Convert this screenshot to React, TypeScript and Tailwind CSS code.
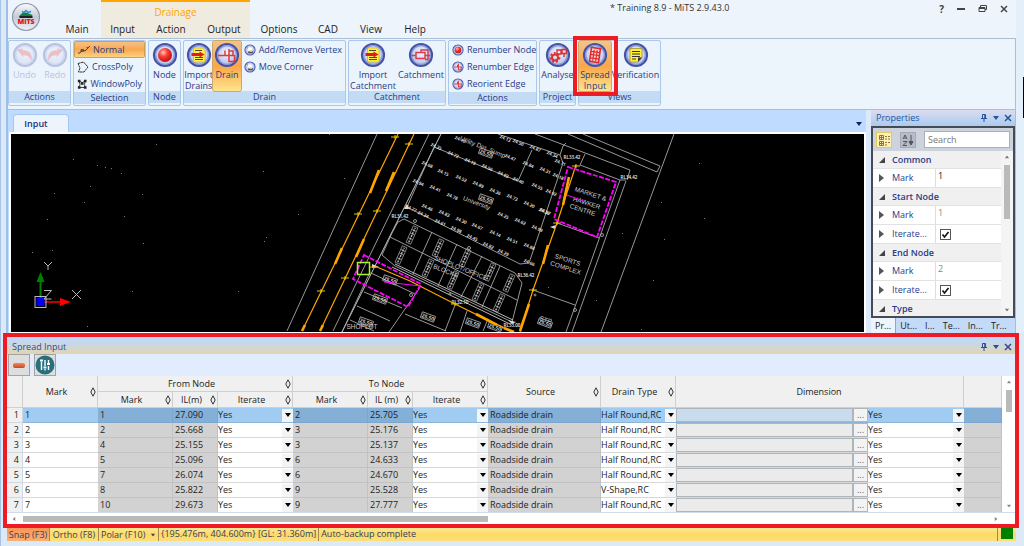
import React from "react";

type Kids = { children?: React.ReactNode };

/* ---------- icons ---------- */

function Orb({ children, small, faded }: Kids & { small?: boolean; faded?: boolean }) {
  return (
    <svg
      viewBox="0 0 26 26"
      aria-hidden="true"
      className={`${small ? "size-3" : "size-[26px]"} shrink-0 ${faded ? "opacity-30" : ""}`}
    >
      <defs>
        <radialGradient id="orbFill" cx="50%" cy="40%" r="60%">
          <stop offset="0" stopColor="#f4f7ff" />
          <stop offset="1" stopColor="#aebbe6" />
        </radialGradient>
        <radialGradient id="ball" cx="38%" cy="32%" r="70%">
          <stop offset="0" stopColor="#ffc4bc" />
          <stop offset="0.45" stopColor="#fb3a30" />
          <stop offset="1" stopColor="#c00f10" />
        </radialGradient>
      </defs>
      <circle cx="13" cy="13" r="11" fill="url(#orbFill)" stroke="#4353a6" strokeWidth="2.2" />
      <circle cx="13" cy="13" r="9.3" fill="none" stroke="#8896d6" strokeWidth="1.2" />
      {children}
    </svg>
  );
}

const Ball = () => <circle cx="13" cy="13" r="7" fill="url(#ball)" />;
const Sheet = () => (
  <g>
    <path d="M7.5 6h9l2.500 2.500v11.500h-11.500z" fill="#fff04a" stroke="#c9a800" strokeWidth="0.6" />
    <path d="M9 8.500h7M9 17.500h8M9 15.500h8" stroke="#333" strokeWidth="0.9" />
    <path d="M5.500 11h8V9.500l5 3-5 3V14h-8z" fill="#e01b1b" />
  </g>
);
const DrainGlyph = () => (
  <path d="M4 13.500h7V8.500M11 13.500h4M15 7v6.500h5.500v6H15v-6M15 9h4v4.500" fill="none" stroke="#e23a3a" strokeWidth="1.500" />
);
const CatchGlyph = () => (
  <path d="M3.500 13.500H8M8 10.500h9v6H8zM17 13.500h5M13 10.500V8h7v5.500M20 13.500v4h-3" fill="none" stroke="#d83c48" strokeWidth="1.400" />
);
const GearGlyph = () => (
  <g fill="none" stroke="#dd2f2f">
    <circle cx="10" cy="15.500" r="3" strokeWidth="2" />
    <circle cx="10" cy="15.500" r="4.600" strokeWidth="1.600" strokeDasharray="2 2" />
    <path d="M12 8h4v4h-4zM17 7.500h4.500v4H17zM16 10h1M19 12v3" strokeWidth="1.400" />
  </g>
);
const SpreadGlyph = () => (
  <g transform="rotate(8 13 13)">
    <path d="M8.500 6h9v14h-9z" fill="#f6d6d6" stroke="#e22b2b" strokeWidth="1.600" />
    <path d="M8.500 10h9M8.500 13h9M8.500 16.500h9M11.500 8v11M14.500 8v11" stroke="#e22b2b" strokeWidth="1.200" />
  </g>
);
const VerifyGlyph = () => (
  <g>
    <path d="M7 6.500h12v9L15 20H7z" fill="#ffee3c" stroke="#8a7a00" strokeWidth="0.600" />
    <path d="M9 9.500h8M9 12h8M9 14.500h8M9 17h4" stroke="#333" strokeWidth="1" />
    <path d="M15 20v-4.500h4z" fill="#333" />
  </g>
);
const EdgeGlyph = () => (
  <path d="M5 13h7V8M12 13h2V6M14 13h6v6h-6z" fill="none" stroke="#e04040" strokeWidth="2.400" />
);
const MoveGlyph = () => (
  <g>
    <path d="M7 7l5 9 8 1" fill="none" stroke="#68c" strokeWidth="2" />
    <rect x="8" y="8" width="9" height="7" rx="3" fill="#fff" />
    <path d="M9 16h10v4H9z" fill="#45516b" />
    <path d="M12 13h5v4h-5z" fill="#ffe45c" />
  </g>
);
const UndoGlyph = () => (
  <path d="M5 7.500l6-1-1 2c7-1 11 4 9.500 10.500-1.500-4-4.500-6.500-8.500-5.500l1 2.500z" fill="#ef4b4b" />
);
const RedoGlyph = () => (
  <path d="M21 7.500l-6-1 1 2c-7-1-11 4-9.500 10.500 1.500-4 4.500-6.500 8.500-5.500l-1 2.500z" fill="#ef4b4b" />
);

function Pin() {
  return (
    <svg viewBox="0 0 8 8" className="size-2" fill="none" stroke="currentColor" aria-hidden="true">
      <path d="M2.500 0.500h3v4M2.500 0.500v4M1 4.500h6M4 5v3" />
      <path d="M5 1v3.500" strokeWidth="1.500" />
    </svg>
  );
}
function Caret({ className = "" }: { className?: string }) {
  return (
    <svg viewBox="0 0 6 4" className={`h-1 w-1.5 ${className}`} fill="currentColor" aria-hidden="true">
      <path d="M0 0h6L3 4z" />
    </svg>
  );
}
function Cross() {
  return (
    <svg viewBox="0 0 8 8" className="size-2" stroke="currentColor" strokeWidth="1.500" aria-hidden="true">
      <path d="M1 1l6 6M7 1L1 7" />
    </svg>
  );
}
function PaneButtons() {
  return (
    <div className="flex items-center gap-1">
      <button aria-label="Pin"><Pin /></button>
      <button aria-label="Menu" className="px-px"><Caret /></button>
      <button aria-label="Close"><Cross /></button>
    </div>
  );
}
function Diamond() {
  return (
    <svg viewBox="0 0 6 10" className="h-2.5 w-1.5 shrink-0" fill="none" stroke="#333" aria-hidden="true">
      <path d="M3 0.800L5.200 5 3 9.200 0.800 5z" />
    </svg>
  );
}

/* ---------- ribbon ---------- */

function Group({ label, width, children }: Kids & { label: string; width: string }) {
  return (
    <section className={`flex flex-col rounded-xs border border-[#a9c8ec] bg-[#ebf3fc] ${width}`}>
      <div className="flex flex-1 items-start">{children}</div>
      <h2 className="mb-0.5 h-[13px] bg-[#c3dbf4] text-center leading-3">{label}</h2>
    </section>
  );
}

function BigButton({
  icon, lines, width, on, off, marked,
}: { icon: React.ReactNode; lines: string[]; width: string; on?: boolean; off?: boolean; marked?: boolean }) {
  return (
    <button
      disabled={off}
      className={`relative flex h-[50px] flex-col items-center pt-px whitespace-nowrap ${width} ${
        on ? "rounded-xs bg-linear-to-b from-[#f3c38b] via-[#f9a648] to-[#fde58c] outline outline-[#cba768]" : ""
      } ${off ? "text-[#b9c3e2]" : ""}`}
    >
      {icon}
      <span className="flex flex-col pt-px leading-[11px]">
        {lines.map((l) => <span key={l}>{l}</span>)}
      </span>
      {marked && <span className="absolute -top-[5px] -right-[7px] -bottom-[5px] -left-[6px] z-10 border-4 border-[#ed1c24]" />}
    </button>
  );
}

function SmallButton({ icon, label, on }: { icon: React.ReactNode; label: string; on?: boolean }) {
  return (
    <button
      className={`flex h-[17px] items-center gap-[3px] px-[3px] whitespace-nowrap ${
        on ? "rounded-xs border border-[#cf9f57] bg-linear-to-b from-[#f6c083] via-[#f9a850] to-[#fdd27e]" : ""
      }`}
    >
      {icon}
      {label}
    </button>
  );
}

const NormalIcon = () => (
  <svg viewBox="0 0 12 10" className="h-2.5 w-3" fill="none" stroke="#444" aria-hidden="true">
    <path d="M0 8h2l2-3 3 1 3-3 2-2" />
    <path d="M3 4.500h2.500v2H3zM8.500 2.500h2" strokeWidth="0.800" />
  </svg>
);
const PolyIcon = () => (
  <svg viewBox="0 0 12 12" className="size-3" fill="none" stroke="#333" aria-hidden="true">
    <path d="M1 2.500l5.500-1.500 4.500 5-4 5H1.500l1.500-4z" strokeDasharray="2.500 0.400" />
  </svg>
);
const WindowPolyIcon = () => (
  <svg viewBox="0 0 12 12" className="size-3" fill="none" stroke="#222" aria-hidden="true">
    <path d="M2.500 2.500l3.500 2 3.500-2-1 4 1 3.500h-7l1-3.500z" />
    <path d="M1 1h3v3H1zM8 1h3v3H8zM1 8.500h3v3H1zM8 8.500h3v3H8zM4.500 4h3v3h-3z" fill="#222" stroke="none" />
  </svg>
);

function Ribbon() {
  return (
    <div className="flex h-[72px] gap-0.5 border-y border-r border-y-[#aebdd2] border-r-[#aebdd2] bg-[#ecf4fc] pt-px pb-[3px] text-[#2a3c86]">
      <Group label="Actions" width="w-[63px]">
        <BigButton off width="w-[31px]" icon={<Orb faded><UndoGlyph /></Orb>} lines={["Undo"]} />
        <BigButton off width="w-[30px]" icon={<Orb faded><RedoGlyph /></Orb>} lines={["Redo"]} />
      </Group>
      <Group label="Selection" width="w-[73px]">
        <div className="flex w-full flex-col">
          <SmallButton on icon={<NormalIcon />} label="Normal" />
          <SmallButton icon={<PolyIcon />} label="CrossPoly" />
          <SmallButton icon={<WindowPolyIcon />} label="WindowPoly" />
        </div>
      </Group>
      <Group label="Node" width="w-[33px]">
        <BigButton width="w-full" icon={<Orb><Ball /></Orb>} lines={["Node"]} />
      </Group>
      <Group label="Drain" width="w-[163px]">
        <BigButton width="w-[31px]" icon={<Orb><Sheet /></Orb>} lines={["Import", "Drains"]} />
        <BigButton on width="w-[29px]" icon={<Orb><DrainGlyph /></Orb>} lines={["Drain"]} />
        <div className="flex flex-col">
          <SmallButton icon={<Orb small><MoveGlyph /></Orb>} label="Add/Remove Vertex" />
          <SmallButton icon={<Orb small><MoveGlyph /></Orb>} label="Move Corner" />
        </div>
      </Group>
      <Group label="Catchment" width="w-[98px]">
        <BigButton width="w-[48px]" icon={<Orb><Sheet /></Orb>} lines={["Import", "Catchment"]} />
        <BigButton width="w-[48px]" icon={<Orb><CatchGlyph /></Orb>} lines={["Catchment"]} />
      </Group>
      <Group label="Actions" width="w-[89px]">
        <div className="flex flex-col">
          <SmallButton icon={<Orb small><Ball /></Orb>} label="Renumber Node" />
          <SmallButton icon={<Orb small><EdgeGlyph /></Orb>} label="Renumber Edge" />
          <SmallButton icon={<Orb small><EdgeGlyph /></Orb>} label="Reorient Edge" />
        </div>
      </Group>
      <Group label="Project" width="w-[37px]">
        <BigButton width="w-full" icon={<Orb><GearGlyph /></Orb>} lines={["Analyse"]} />
      </Group>
      <Group label="Views" width="w-[83px]">
        <BigButton on marked width="w-[32px]" icon={<Orb><SpreadGlyph /></Orb>} lines={["Spread", "Input"]} />
        <BigButton width="w-[49px]" icon={<Orb><VerifyGlyph /></Orb>} lines={["Verification"]} />
      </Group>
    </div>
  );
}

function Tab({ label, width }: { label: string; width: string }) {
  return <button className={`h-[18px] text-center text-[#222] ${width}`}>{label}</button>;
}

function TitleBar() {
  return (
    <header className="flex h-[38px] bg-[#edf4fc] text-[10px]">
      <div className="flex w-[45px] items-center pb-1 pl-[3px]">
        <svg viewBox="0 0 30 30" className="size-[30px]" role="img" aria-label="MiTS">
          <defs>
            <linearGradient id="appBtn" x1="0" y1="0" x2="0" y2="1">
              <stop offset="0" stopColor="#fafbfd" />
              <stop offset="0.5" stopColor="#c5cbd6" />
              <stop offset="1" stopColor="#eef1f6" />
            </linearGradient>
          </defs>
          <circle cx="15" cy="15" r="13.500" fill="url(#appBtn)" stroke="#8d97a8" strokeWidth="1.200" />
          <path d="M8.500 13.500l4-3.500 4 1 5 2-1 2.500h-12z" fill="#17803d" />
          <path d="M11 9.500l2 1 2-2 2 2 3-1" fill="none" stroke="#2d8fd0" strokeWidth="1.500" />
          <path d="M8.500 14h13v2h-13z" fill="#222" />
          <text x="15" y="21.500" textAnchor="middle" fontSize="7" fontWeight="800" fill="#e3141b">MiTS</text>
        </svg>
      </div>
      <nav className="flex items-end">
        <Tab label="Main" width="w-[48px]" />
        <div className="flex h-full flex-col justify-between border-t-2 border-[#ffa500] bg-[#f0ebdf]">
          <span className="pt-1 text-center text-[#ffa500]">Drainage</span>
          <div className="flex">
            <Tab label="Input" width="w-[43px]" />
            <Tab label="Action" width="w-[54px]" />
            <Tab label="Output" width="w-[52px]" />
          </div>
        </div>
        <Tab label="Options" width="w-[58px]" />
        <Tab label="CAD" width="w-[40px]" />
        <Tab label="View" width="w-[46px]" />
        <Tab label="Help" width="w-[42px]" />
      </nav>
      <h1 className="flex-1 pt-0.5 pl-[174px] text-[9px] text-[#333]">* Training 8.9 - MiTS 2.9.43.0</h1>
      <div className="flex h-[17px] items-center gap-[13px] pr-2 text-[#444]">
        <button aria-label="Help" className="text-[10px] font-bold">?</button>
        <button aria-label="Minimize"><span className="block h-0.5 w-2 bg-[#444]" /></button>
        <button aria-label="Restore">
          <svg viewBox="0 0 9 9" className="size-[9px]" fill="none" stroke="currentColor" aria-hidden="true">
            <path d="M2.500 3V1.500h6v4H7M1 3.500h6v4H1zM1 4.500h6" />
          </svg>
        </button>
        <button aria-label="Close"><Cross /></button>
      </div>
    </header>
  );
}

/* ---------- drawing ---------- */

const dots = [
  [156, 144], [73, 159], [97, 165], [105, 167], [111, 168], [121, 173], [90, 186], [54, 193], [142, 194], [84, 202],
  [124, 216], [47, 219], [143, 243], [32, 252], [52, 250], [42, 277], [132, 291], [238, 291], [263, 171], [298, 214],
  [266, 237], [264, 241], [87, 326], [329, 134], [344, 178], [699, 163], [661, 202], [704, 218], [622, 233], [664, 239],
  [653, 280], [596, 300], [641, 329], [548, 287],
];

const spots = [
  [460, 140], [510, 158], [528, 165], [545, 171], [427, 165], [443, 173], [461, 179], [478, 185], [495, 192], [512, 198],
  [529, 205], [545, 212], [418, 183], [435, 189], [452, 197], [503, 216], [520, 222], [537, 229], [427, 208], [444, 214],
  [461, 221], [477, 227], [495, 234], [512, 241], [529, 247], [436, 147], [453, 155], [470, 162], [487, 168], [503, 175],
  [518, 181], [411, 209], [423, 215], [440, 223], [456, 230], [472, 238], [488, 246], [503, 253], [529, 263], [505, 139],
  [518, 143], [535, 149], [552, 155], [560, 163], [558, 177], [537, 187], [551, 193], [544, 212],
];

const boxed = [
  [486, 153], [486, 199], [390, 280], [380, 299], [428, 317], [366, 322], [473, 323], [545, 323], [495, 327],
];

const stacks = [
  [412, 235], [401, 255], [438, 248], [428, 268], [465, 258], [453, 280], [490, 272], [478, 292], [509, 283], [499, 303],
];

const crosses = [
  [395, 137], [409, 144], [358, 214], [377, 211], [345, 278], [321, 291], [576, 166], [557, 223], [533, 290], [455, 304],
];

const words: [number, number, number, string][] = [
  [590, 196, 18, "MARKET &"], [586, 205, 18, "HAWKER"], [582, 212, 18, "CENTRE"], [567, 262, 18, "SPORTS"],
  [565, 270, 18, "COMPLEX"], [545, 322, 18, "STP"], [460, 270, 22, "SHOPLOT/OFFICE"], [445, 273, 22, "BLOCKS"],
  [476, 205, 20, "University"], [482, 149, 22, "Utility Det. Sump"], [362, 329, 0, "SHOPLOT"],
];

function Drawing() {
  return (
    <svg
      viewBox="11 134 853 198"
      preserveAspectRatio="xMinYMin slice"
      className="h-full w-full"
      role="img"
      aria-label="Drainage layout plan"
    >
      <g fill="#777">
        {dots.map(([x, y]) => <rect key={`${x}-${y}`} x={x} y={y} width="1" height="1" />)}
      </g>
      <g fill="none" stroke="#a8a8a8" strokeWidth="0.900">
        <path d="M287 331L377 134M333 331L429 134" />
        <path d="M342 332L441 134" stroke="#ddd" />
        <path d="M434 147L407 207L520 264L529 263L563 163L560 155L498 134M434 147L518 181L532 150M563 146L560 155" />
        <path d="M535 134L630 170L627 180M568 134L657 172L660 166L583 134M674 134L601 332M585 154L580 165L620 180H626" />
        <path d="M620 180L566 332M626 181L572 332M557 223L599 238M533 290L575 305M563 146L566 143" />
        <path d="M404 219L515 273L522 283L512 322L395 266L382 255L392 233L398 222z" />
        <path d="M390 237L517 300M432 232L413 274M457 244L438 286M482 256L461 297M500 266L482 307" />
        <path d="M395 264L513 320M392 267L510 324" stroke="#ccc" />
        <path d="M370 272L342 332M364 292L402 308M357 306L390 321M350 320L374 331M421 286L389 332M405 314L446 331" />
        <path d="M455 305L445 331M467 311L460 332M488 319L483 331M371 273L415 294" />
        <circle cx="415" cy="221" r="1.500" />
        <circle cx="469" cy="248" r="1.500" />
        <circle cx="411" cy="295" r="1.500" />
        <circle cx="602" cy="235" r="1.500" />
        <circle cx="575" cy="310" r="1.500" />
        <circle cx="535" cy="295" r="1" />
        <circle cx="450" cy="294" r="1" />
      </g>
      <g fill="#f0f0f0" fontSize="4.500" fontWeight="600" textAnchor="middle">
        {spots.map(([x, y], i) => (
          <text key={i} x={x} y={y + 1} transform={`rotate(24 ${x} ${y})`}>
            {`24.${(i * 37) % 90 + 10}`}
          </text>
        ))}
        {boxed.map(([x, y]) => (
          <g key={`${x}-${y}`} transform={`rotate(20 ${x} ${y})`}>
            <rect x={x - 7} y={y - 3} width="14" height="6" fill="none" stroke="#aaa" strokeWidth="0.800" />
            <text x={x} y={y + 2} fontSize="5">25.50</text>
          </g>
        ))}
        <text x="400" y="218">RL31.42</text>
        <text x="526" y="277">RL36.42</text>
        <text x="460" y="304">RL32.10</text>
        <text x="572" y="159">RL33.42</text>
        <text x="629" y="179">RL34.42</text>
        <text x="512" y="327">RL33.00</text>
      </g>
      <g fill="none" stroke="#bbb" strokeWidth="1">
        {stacks.map(([x, y]) => (
          <g key={`${x}-${y}`} transform={`rotate(-66 ${x} ${y})`}>
            <path d={`M${x - 9} ${y - 2.5}h18v5h-18zM${x - 4} ${y - 2.5}v5M${x + 1} ${y - 2.5}v5M${x + 5} ${y - 2.5}v5`} strokeWidth="0.600" />
            <path d={`M${x - 8} ${y}h16`} strokeDasharray="2 1" strokeWidth="1.500" />
          </g>
        ))}
      </g>
      <g fill="#ccc" fontSize="6.500" textAnchor="middle" fontFamily="Liberation Sans, sans-serif">
        {words.map(([x, y, r, t]) => <text key={t} x={x} y={y} transform={`rotate(${r} ${x} ${y})`}>{t}</text>)}
      </g>
      <path d="M407 204l2 5h-5zM372 264l7 3-7 1zM550 227l6-2-1 4zM508 320l8 2-4 2z" fill="#ddd" />
      <g fill="none" stroke="#ffa500">
        <path d="M302 331L398 134M320 331L414 134M576 165L557 223L533 290L520 332M369 267H377L410 281L455 304L512 332" strokeWidth="1.200" />
        <path
          d="M370 193L379 170M386 191L394 172M335 264L342 248M356 257L364 239M302 331L305 325M320 331L323 325M569 177L563 205M548 245L543 264M529 304L520 331M476 314L497 325M504 328L514 332"
          strokeWidth="2.600"
        />
      </g>
      <g stroke="#e8c800" strokeWidth="1">
        {crosses.map(([x, y]) => <path key={`${x}-${y}`} d={`M${x - 4} ${y}h8M${x} ${y - 2}v4`} />)}
      </g>
      <path d="M568 167L616 182L597 237L554 219zM364 255L421 284L408 307L353 279z" fill="none" stroke="#ff00ff" strokeWidth="1.800" strokeDasharray="5 1.500" />
      <path d="M384 282L421 286M567 195L586 202" stroke="#ff00ff" strokeWidth="1" fill="none" />
      <rect x="357.500" y="262.500" width="12" height="12" fill="none" stroke="#a6f52c" strokeWidth="1.500" />
      <g>
        <path d="M40.500 298V280" stroke="#008000" strokeWidth="2" />
        <path d="M36.500 282L40.500 272L44.500 282z" fill="#008000" />
        <path d="M44 302H60" stroke="#f00" strokeWidth="1.500" />
        <path d="M60 298L71 302L60 306z" fill="#f00" />
        <rect x="35" y="296.500" width="11" height="11" fill="none" stroke="#bbb" />
        <rect x="36.500" y="298" width="8" height="8" fill="#0000ff" />
        <path d="M44 262l4 4 4-4M48 266v4M72 290l9 9M81 290l-9 9M44 290.500h7.500L44 299h7.500" fill="none" stroke="#bbb" />
      </g>
    </svg>
  );
}

/* ---------- properties ---------- */

function Category({ label }: { label: string }) {
  return (
    <div className="flex h-[18px] items-center gap-[7px] border-b border-[#e2e2e2] bg-[#f0f0f0] pl-[6px] font-semibold">
      <svg viewBox="0 0 6 6" className="size-1.5" aria-hidden="true"><path d="M6 0v6H0z" fill="#444" /></svg>
      {label}
    </div>
  );
}

function Item({ label, id, value, muted }: { label: string; id: string; value?: string; muted?: boolean }) {
  return (
    <div className="flex h-[19px] border-b border-[#e2e2e2] bg-white">
      <label htmlFor={id} className="flex w-[63px] items-center gap-2 border-r border-[#ddd] pl-[6px]">
        <svg viewBox="0 0 5 8" className="h-2 w-[5px]" aria-hidden="true"><path d="M0 0l5 4-5 4z" fill="#555" /></svg>
        {label}
      </label>
      {value ? (
        <input id={id} defaultValue={value} className={`min-w-0 flex-1 pb-1 pl-0.5 outline-none ${muted ? "text-[#888]" : "text-[#222]"}`} />
      ) : (
        <span className="grid items-center pl-1">
          <input
            id={id}
            type="checkbox"
            defaultChecked
            className="peer col-start-1 row-start-1 size-[11px] appearance-none border border-[#555] bg-white"
          />
          <svg viewBox="0 0 11 11" className="pointer-events-none invisible col-start-1 row-start-1 size-[11px] peer-checked:visible" fill="none" stroke="#111" strokeWidth="1.600" aria-hidden="true">
            <path d="M2.500 5.500l2 2.500L8.500 3" />
          </svg>
        </span>
      )}
    </div>
  );
}

function Properties() {
  return (
    <aside className="flex w-[145px] flex-col border-r border-[#9bbfe8] bg-[#c3daf8] text-[#2a3c86]">
      <div className="flex h-[16px] items-center justify-between bg-linear-to-b from-[#dcdcf0] to-[#a9cbf0] pr-[3px] pl-[5px] text-[#22559c]">
        <h2>Properties</h2>
        <PaneButtons />
      </div>
      <div className="flex min-h-0 flex-1 flex-col border-2 border-[#444b55] bg-[#cdd3dc]">
        <div className="flex h-[23px] items-center gap-2 px-[3px]">
          <button aria-label="Categorized" className="border border-[#e6c860] bg-[#fdf0b4] p-px">
            <svg viewBox="0 0 12 12" className="size-3" fill="none" stroke="#8a7440" aria-hidden="true">
              <path d="M1.500 1.500h4v4h-4zM1.500 7.500h4v4h-4zM2 3.500h3M3.500 2v3M2 9.500h3M3.500 8v3M7 2.500h2M10 2.500h2M7 5h2M10 5h2M7 8.500h2M10 8.500h2M7 11h2" />
            </svg>
          </button>
          <button aria-label="Sort alphabetically" className="border border-[#a4abb6] bg-[#b5bcc8] p-px">
            <svg viewBox="0 0 12 12" className="size-3" fill="none" stroke="#50555e" aria-hidden="true">
              <path d="M1 5l2-4 2 4M2 4h2M1 7.500h4l-4 4h4M9 1v9" />
              <path d="M7 7.500h4L9 11z" fill="#50555e" />
            </svg>
          </button>
          <input aria-label="Search" placeholder="Search" className="h-[17px] min-w-0 flex-1 border border-[#a8b0bc] bg-white px-[3px] placeholder:text-[#777]" />
        </div>
        <div className="flex min-h-0 flex-1">
          <div className="min-w-0 flex-1 overflow-hidden">
            <Category label="Common" />
            <Item id="c-mark" label="Mark" value="1" />
            <Category label="Start Node" />
            <Item id="s-mark" label="Mark" value="1" muted />
            <Item id="s-iter" label="Iterate..." />
            <Category label="End Node" />
            <Item id="e-mark" label="Mark" value="2" muted />
            <Item id="e-iter" label="Iterate..." />
            <Category label="Type" />
          </div>
          <div className="flex w-3 flex-col items-center justify-between bg-[#f4f4f4] py-1 text-[#777]">
            <Caret className="rotate-180 scale-75" />
            <div className="mt-1.5 mb-auto h-[54px] w-1.5 bg-[#bababa]" />
            <Caret className="scale-75" />
          </div>
        </div>
      </div>
      <div className="flex h-[15px] items-center text-[#222]">
        {["Pr...", "Ut...", "I...", "Te...", "In...", "Tr..."].map((t, i) => (
          <button key={t} className={`h-full px-1 ${i === 0 ? "border-r border-[#8aa8cc] bg-[#edf4fc]" : ""}`}>{t}</button>
        ))}
      </div>
    </aside>
  );
}

/* ---------- spread input ---------- */

type Row = [string, string, string, string, string, string];
const rows: Row[] = [
  ["1", "1", "27.090", "2", "25.705", "Half Round,RC"],
  ["2", "2", "25.668", "3", "25.176", "Half Round,RC"],
  ["3", "4", "25.155", "3", "25.137", "Half Round,RC"],
  ["4", "5", "25.096", "6", "24.633", "Half Round,RC"],
  ["5", "7", "26.074", "6", "24.670", "Half Round,RC"],
  ["6", "8", "25.822", "9", "25.528", "V-Shape,RC"],
  ["7", "10", "29.673", "9", "27.777", "Half Round,RC"],
];

function Head({ children, sort = true, ...span }: Kids & { sort?: boolean; rowSpan?: number; colSpan?: number }) {
  return (
    <th {...span} className="border-r border-b border-[#cfcfcf] p-0 font-normal">
      <div className="flex items-center pr-px">
        <span className="flex-1">{children}</span>
        {sort && <Diamond />}
      </div>
    </th>
  );
}

function Pick({ value, label }: { value: string; label: string }) {
  const options = value === "Yes" ? ["Yes", "No"] : ["Half Round,RC", "V-Shape,RC"];
  return (
    <div className="grid h-[14px] items-center">
      <select aria-label={label} defaultValue={value} className="col-start-1 row-start-1 h-[14px] w-full appearance-none leading-[14px] outline-none">
        {options.map((o) => <option key={o}>{o}</option>)}
      </select>
      <span className="pointer-events-none col-start-1 row-start-1 flex h-[13px] w-[11px] items-center justify-center justify-self-end bg-[#f3f4f5] text-black">
        <Caret />
      </span>
    </div>
  );
}

function SpreadTable() {
  const widths = ["w-[16px]", "w-[75px]", "w-[75px]", "w-[45px]", "w-[75px]", "w-[75px]", "w-[45px]", "w-[75px]", "w-[113px]", "w-[75px]", "w-[177px]", "w-[15px]", "w-[96px]", ""];
  return (
    <table className="w-full table-fixed border-separate border-spacing-0">
      <colgroup>{widths.map((w, i) => <col key={i} className={w} />)}</colgroup>
      <thead className="bg-[#f0f0f0]">
        <tr className="h-4">
          <Head rowSpan={2} sort={false} />
          <Head rowSpan={2}>Mark</Head>
          <Head colSpan={3}>From Node</Head>
          <Head colSpan={3}>To Node</Head>
          <Head rowSpan={2}>Source</Head>
          <Head rowSpan={2}>Drain Type</Head>
          <Head rowSpan={2} colSpan={3} sort={false}>Dimension</Head>
          <Head rowSpan={2} sort={false} />
        </tr>
        <tr className="h-4">
          <Head>Mark</Head><Head>IL(m)</Head><Head>Iterate</Head>
          <Head>Mark</Head><Head>IL (m)</Head><Head>Iterate</Head>
        </tr>
      </thead>
      <tbody>
        {rows.map(([mark, from, fromIl, to, toIl, type], i) => {
          const open = i === 0 ? "border-b border-[#8fb4d6] bg-[#a0ccf1] p-0" : "border-b border-[#d8d8d8] bg-white p-0";
          const lock = i === 0
            ? "border-b border-r border-[#7ba6cd] bg-[#84afd6] p-0 pl-0.5"
            : "border-b border-r border-[#c2c2c2] bg-[#d2d2d2] p-0 pl-0.5";
          return (
            <tr key={mark} className="h-[15px]">
              <th scope="row" className="border-r border-b border-[#d0d8e2] bg-[#f0f0f0] p-0 pr-[3px] text-right font-normal">{mark}</th>
              <td className={`${open} pl-0.5`}>{mark}</td>
              <td className={lock}>{from}</td>
              <td className={lock}>{fromIl}</td>
              <td className={open}><Pick value="Yes" label={`From node iterate, row ${mark}`} /></td>
              <td className={lock}>{to}</td>
              <td className={lock}>{toIl}</td>
              <td className={open}><Pick value="Yes" label={`To node iterate, row ${mark}`} /></td>
              <td className={lock}>Roadside drain</td>
              <td className={open}><Pick value={type} label={`Drain type, row ${mark}`} /></td>
              <td className={open}>
                <input aria-label={`Dimension, row ${mark}`} className={`block h-[14px] w-full border border-[#b0b5ba] ${i === 0 ? "bg-[#c9dcee]" : "bg-[#ebebeb]"}`} />
              </td>
              <td className={open}>
                <button aria-label="Edit dimension" className="block h-[14px] w-full border border-[#b0b5ba] bg-[#f3f3f3] leading-3 text-[#666]">...</button>
              </td>
              <td className={open}><Pick value="Yes" label={`Dimension iterate, row ${mark}`} /></td>
              <td className={lock} />
            </tr>
          );
        })}
      </tbody>
    </table>
  );
}

function SpreadInput() {
  return (
    <section className="mr-[5px] ml-0.5 border-4 border-[#ed1c24] bg-[#e1edfe] text-[#222]">
      <div className="flex h-[17px] items-center justify-between border-t-2 border-[#bcd7fb] bg-linear-to-b from-[#bfd8fb] to-[#e0d5ae] pr-[3px] pl-[5px] text-[#34479a]">
        <h2>Spread Input</h2>
        <PaneButtons />
      </div>
      <div className="flex h-[22px] gap-1 pl-px">
        <button aria-label="Remove row" className="flex size-[22px] items-center justify-center border border-[#a3a3a3] bg-[#dedede]">
          <span className="h-[5px] w-3 rounded-xs bg-linear-to-b from-[#f0875c] to-[#cf4316]" />
        </button>
        <button aria-label="Settings" className="flex size-[22px] items-center justify-center border border-[#a3a3a3] bg-[#dedede]">
          <svg viewBox="0 0 20 20" className="size-5" aria-hidden="true">
            <circle cx="10" cy="10" r="9.500" fill="#286f7e" />
            <path d="M6.500 7v8M10 5v6M13.500 5v3M13.500 11v4M10 14v1.500" stroke="#fff" strokeWidth="1.400" />
            <path d="M5 5.500h3M8.500 12.500h3M12 9h3" stroke="#fff" strokeWidth="1.800" />
          </svg>
        </button>
      </div>
      <div className="flex">
        <div className="h-[136px] min-w-0 flex-1 overflow-hidden"><SpreadTable /></div>
        <div className="flex w-[13px] flex-col items-center justify-between bg-white py-1 text-[#888]">
          <Caret className="rotate-180 scale-75" />
          <div className="mt-1.5 mb-auto h-[22px] w-1.5 bg-[#bababa]" />
          <Caret className="scale-75" />
        </div>
      </div>
      <div className="flex h-[12px] items-center border-t border-[#d0dcea] bg-white px-1 text-[#888]">
        <Caret className="rotate-90 scale-75" />
        <div className="mr-auto ml-[6px] h-1.5 w-[465px] bg-[#bababa]" />
        <Caret className="mr-3 -rotate-90 scale-75" />
      </div>
    </section>
  );
}

function StatusBar() {
  return (
    <footer className="mr-2 ml-1.5 flex h-[13px] bg-linear-to-b from-[#fde893] via-[#fdd965] to-[#fde07c] leading-3 whitespace-nowrap text-[#34405e]">
      <button className="w-[43px] border-r border-[#a08a50] bg-linear-to-b from-[#f7965a] to-[#fab074]">Snap (F3)</button>
      <button className="w-[49px] border-r border-[#a08a50]">Ortho (F8)</button>
      <button className="flex w-[60px] items-center justify-between border-r border-[#a08a50] px-0.5">
        Polar (F10) <Caret className="scale-75" />
      </button>
      <span className="border-r border-[#a08a50] px-0.5">{"{195.476m, 404.600m} [GL: 31.360m]"}</span>
      <span className="flex-1 pl-0.5">Auto-backup complete</span>
      <span className="border-l border-[#a08a50] px-[3px]"><span className="block h-[11px] w-3 bg-[#008000]" /></span>
    </footer>
  );
}

export default function App() {
  return (
    <div className="flex h-screen flex-col overflow-hidden border-l border-[#a9c3e6] bg-[#dce9f7] pb-[5px] font-['Open_Sans','Noto_Sans',sans-serif] text-[9px] leading-3">
      <div className="flex min-h-0 flex-1">
        <div className="ml-[5px] flex min-w-0 flex-1 flex-col border-l-2 border-[#9dbfea]">
          <TitleBar />
          <Ribbon />
          <main className="flex min-h-0 flex-1 gap-[5px] bg-[#dbe9fb]">
            <section className="flex min-w-0 flex-1 flex-col bg-[#bfdbff] pt-1 pl-px">
              <div className="flex items-end justify-between pr-1 pl-1">
                <button className="h-[18px] w-[56px] rounded-t-sm border border-b-0 border-[#a3c8f3] bg-[#edf4fc] pr-2.5 font-semibold text-[#1f2f7c]">Input</button>
                <Caret className="mb-1.5 text-[#10206c]" />
              </div>
              <div className="min-h-0 flex-1 border-2 border-b border-white bg-black">
                <Drawing />
              </div>
            </section>
            <Properties />
          </main>
        </div>
        <div className="flex w-2 flex-col items-end bg-[#e4effc] pt-[77px]">
          <span className="h-[41px] w-px bg-black" />
        </div>
      </div>
      <SpreadInput />
      <StatusBar />
    </div>
  );
}
